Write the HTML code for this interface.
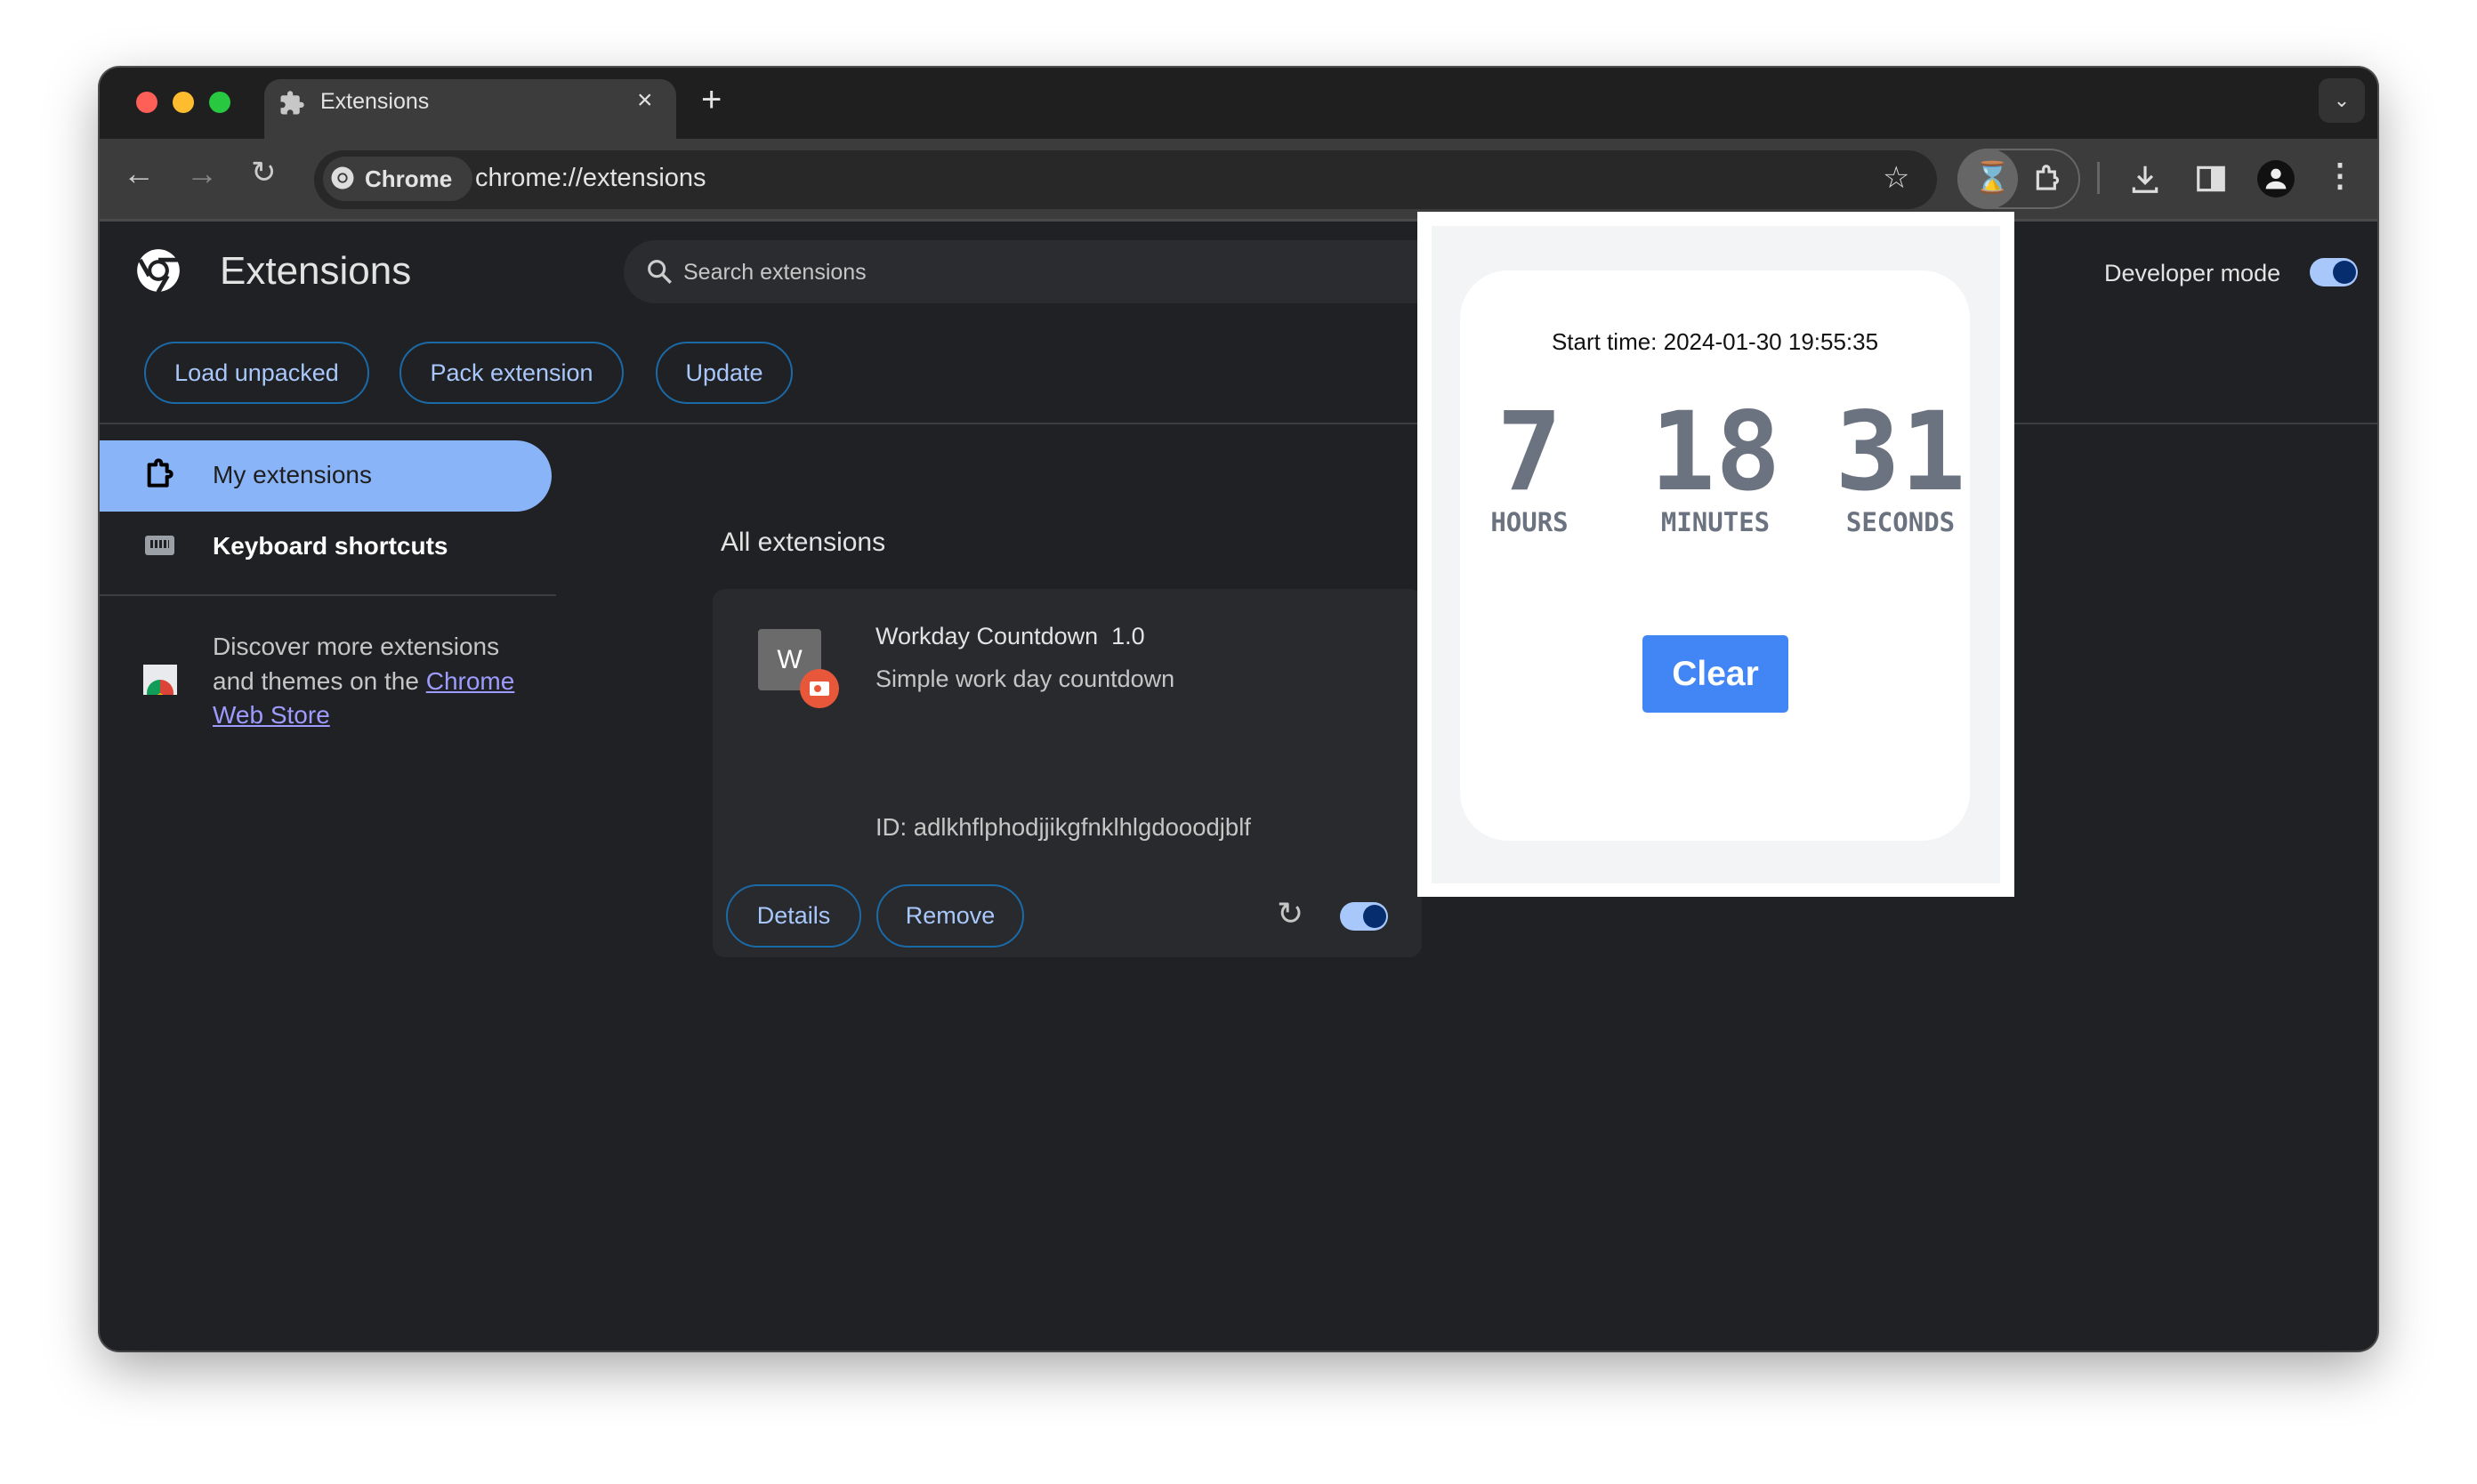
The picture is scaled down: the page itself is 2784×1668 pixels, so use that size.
<!DOCTYPE html>
<html><head><meta charset="utf-8"><style>
*{margin:0;padding:0;box-sizing:border-box}
body{width:2784px;height:1668px;background:#fff;font-family:"Liberation Sans",sans-serif;position:relative;overflow:hidden}
.a{position:absolute}
.win{left:112px;top:76px;width:2560px;height:1442px;background:#202124;border-radius:22px;overflow:hidden;box-shadow:0 20px 60px rgba(0,0,0,.35),0 0 0 2px #555}
.btn{position:absolute;border:2px solid #1b6aa8;border-radius:40px;color:#a8c7fa;font-size:27px;display:flex;align-items:center;justify-content:center}
.t{white-space:nowrap}
.mono{font-family:"DejaVu Sans Mono",monospace;font-weight:bold;color:#6b7280;text-align:center}
</style></head><body>
<div class="a win">
 <div class="a" style="left:0;top:0;width:2560px;height:80px;background:#1f1f1f"></div>
 <div class="a" style="left:41px;top:27px;width:24px;height:24px;border-radius:50%;background:#fe5f57"></div>
 <div class="a" style="left:82px;top:27px;width:24px;height:24px;border-radius:50%;background:#febc2e"></div>
 <div class="a" style="left:123px;top:27px;width:24px;height:24px;border-radius:50%;background:#28c840"></div>
 <div class="a" style="left:185px;top:13px;width:463px;height:80px;background:#3c3c3c;border-radius:18px 18px 0 0"></div>
 <svg class="a" style="left:201px;top:25px" width="30" height="30" viewBox="0 0 24 24"><path fill="#c7c7c7" d="M20.5 11H19V7a2 2 0 0 0-2-2h-4V3.5a2.5 2.5 0 0 0-5 0V5H4a2 2 0 0 0-2 2v3.8h1.5a2.7 2.7 0 0 1 0 5.4H2V20a2 2 0 0 0 2 2h3.8v-1.5a2.7 2.7 0 0 1 5.4 0V22H17a2 2 0 0 0 2-2v-4h1.5a2.5 2.5 0 0 0 0-5z"/></svg>
 <div class="a t" style="left:248px;top:24px;font-size:25px;color:#e3e3e3">Extensions</div>
 <div class="a t" style="left:604px;top:20px;font-size:30px;color:#e3e3e3">×</div>
 <div class="a t" style="left:676px;top:14px;font-size:40px;color:#e3e3e3;font-weight:300">+</div>
 <div class="a" style="left:2494px;top:12px;width:52px;height:50px;background:#333;border-radius:12px;color:#ddd;font-size:22px;text-align:center;line-height:50px">⌄</div>
 <div class="a" style="left:0;top:80px;width:2560px;height:90px;background:#3c3c3c"></div>
 <div class="a" style="left:0;top:170px;width:2560px;height:3px;background:#4a4a4a"></div>
 <div class="a t" style="left:26px;top:98px;font-size:36px;color:#ccc">←</div>
 <div class="a t" style="left:97px;top:98px;font-size:36px;color:#888">→</div>
 <div class="a t" style="left:170px;top:98px;font-size:34px;color:#ccc">↻</div>
 <div class="a" style="left:241px;top:93px;width:1824px;height:66px;background:#282828;border-radius:33px"></div>
 <div class="a" style="left:251px;top:100px;width:168px;height:50px;background:#3c3c3c;border-radius:25px"></div>
 <svg class="a" style="left:258px;top:109px" width="30" height="30" viewBox="0 0 24 24"><circle cx="12" cy="12" r="10" fill="#ddd"/><circle cx="12" cy="12" r="4.5" fill="#3c3c3c"/><circle cx="12" cy="12" r="3" fill="#ddd"/></svg>
 <div class="a t" style="left:298px;top:110px;font-size:26px;color:#e3e3e3;font-weight:bold">Chrome</div>
 <div class="a t" style="left:422px;top:108px;font-size:29px;color:#e3e3e3">chrome://extensions</div>
 <div class="a t" style="left:2004px;top:104px;font-size:34px;color:#ddd">☆</div>
 <div class="a" style="left:2088px;top:91px;width:138px;height:68px;border:2px solid #666;border-radius:34px"></div>
 <div class="a" style="left:2088px;top:91px;width:68px;height:68px;background:#666;border-radius:50%"></div>
 <div class="a t" style="left:2106px;top:104px;font-size:34px;color:#e9a23b">⌛</div>
 <svg class="a" style="left:2172px;top:106px" width="38" height="38" viewBox="0 0 24 24"><path fill="none" stroke="#ddd" stroke-width="2" d="M4 7h4V5a2 2 0 0 1 4 0v2h4v4a2 2 0 0 1 0 4v4H4z"/></svg>
 <div class="a" style="left:2245px;top:106px;width:3px;height:36px;background:#666"></div>
 <svg class="a" style="left:2280px;top:106px" width="38" height="38" viewBox="0 0 24 24"><path fill="none" stroke="#ddd" stroke-width="2" d="M12 3v12M7 10l5 5 5-5M4 18v3h16v-3"/></svg>
 <svg class="a" style="left:2354px;top:106px" width="38" height="38" viewBox="0 0 24 24"><rect x="3" y="4" width="18" height="16" fill="none" stroke="#ddd" stroke-width="2"/><rect x="12" y="4" width="9" height="16" fill="#ddd"/></svg>
 <div class="a" style="left:2425px;top:104px;width:42px;height:42px;background:#111;border-radius:50%"></div>
 <svg class="a" style="left:2429px;top:108px" width="34" height="34" viewBox="0 0 24 24"><circle cx="12" cy="8" r="4" fill="#eee"/><path fill="#eee" d="M4 20c0-4 4-6 8-6s8 2 8 6z"/></svg>
 <div class="a t" style="left:2500px;top:100px;font-size:36px;color:#ddd;font-weight:bold">⋮</div>

 <svg class="a" style="left:40px;top:202px" width="52" height="52" viewBox="0 0 24 24"><circle cx="12" cy="12" r="11" fill="#fff"/><circle cx="12" cy="12" r="5.5" fill="#202124"/><circle cx="12" cy="12" r="3.6" fill="#fff"/><path d="M12 6.5h10M7.2 14.8L2.5 6.5M16.8 14.8l-5 8.6" stroke="#202124" stroke-width="2.2"/></svg>
 <div class="a t" style="left:135px;top:204px;font-size:44px;color:#e3e3e3">Extensions</div>
 <div class="a" style="left:589px;top:194px;width:1000px;height:71px;background:#2b2c2f;border-radius:36px"></div>
 <svg class="a" style="left:612px;top:212px" width="34" height="34" viewBox="0 0 24 24"><circle cx="10" cy="10" r="6" fill="none" stroke="#ccc" stroke-width="2.2"/><path d="M14.5 14.5L21 21" stroke="#ccc" stroke-width="2.4"/></svg>
 <div class="a t" style="left:656px;top:216px;font-size:25px;color:#c4c7c5">Search extensions</div>
 <div class="a t" style="left:2253px;top:216px;font-size:27px;color:#e3e3e3">Developer mode</div>
 <div class="a" style="left:2484px;top:214px;width:54px;height:32px;background:#a8c7fa;border-radius:16px"></div>
 <div class="a" style="left:2510px;top:217px;width:26px;height:26px;background:#062e6f;border-radius:50%"></div>
 <div class="btn" style="left:50px;top:308px;width:253px;height:70px">Load unpacked</div>
 <div class="btn" style="left:337px;top:308px;width:252px;height:70px">Pack extension</div>
 <div class="btn" style="left:625px;top:308px;width:154px;height:70px">Update</div>
 <div class="a" style="left:0;top:399px;width:2560px;height:2px;background:#3c3d40"></div>

 <div class="a" style="left:0;top:419px;width:508px;height:80px;background:#8ab4f8;border-radius:0 40px 40px 0"></div>
 <svg class="a" style="left:49px;top:438px" width="40" height="40" viewBox="0 0 24 24"><path fill="none" stroke="#000" stroke-width="2.4" stroke-linejoin="round" d="M4 5h4.5V3.8a1.8 1.8 0 0 1 3.6 0V5H16v4.5h1.2a1.8 1.8 0 0 1 0 3.6H16V19H4z"/></svg>
 <div class="a t" style="left:127px;top:442px;font-size:28px;color:#1f1f1f">My extensions</div>
 <div class="a" style="left:51px;top:526px;width:33px;height:22px;border-radius:3px;background:#9aa0a6"></div>
 <div class="a" style="left:57px;top:531px;width:21px;height:9px;background:repeating-linear-gradient(90deg,#202124 0 3px,#9aa0a6 3px 5px)"></div>
 <div class="a t" style="left:127px;top:522px;font-size:28px;color:#fff;font-weight:bold">Keyboard shortcuts</div>
 <div class="a" style="left:0;top:592px;width:513px;height:2px;background:#3c3d40"></div>
 <div class="a" style="left:49px;top:671px;width:38px;height:34px;background:#e8eaed"></div>
 <div class="a" style="left:53px;top:688px;width:30px;height:30px;border-radius:50%;background:conic-gradient(#db4437 0 33%,#f4b400 0 66%,#0f9d58 0);clip-path:inset(0 0 13px 0)"></div>
 <div class="a" style="left:127px;top:632px;font-size:28px;line-height:38.5px;color:#c4c7c5;width:345px">Discover more extensions and themes on the <span style="color:#9e9bff;text-decoration:underline">Chrome Web Store</span></div>

 <div class="a t" style="left:698px;top:517px;font-size:30px;color:#e3e3e3">All extensions</div>
 <div class="a" style="left:689px;top:586px;width:797px;height:414px;background:#292a2d;border-radius:14px"></div>
 <div class="a" style="left:740px;top:631px;width:71px;height:69px;background:#6b6b6b;border-radius:4px;color:#fff;font-size:30px;text-align:center;line-height:69px">W</div>
 <div class="a" style="left:787px;top:676px;width:44px;height:44px;background:#e8573a;border-radius:50%"></div>
 <div class="a" style="left:798px;top:690px;width:22px;height:16px;background:#fff;border-radius:2px"></div>
 <div class="a" style="left:803px;top:694px;width:8px;height:8px;background:#e8573a;border-radius:50%"></div>
 <div class="a t" style="left:872px;top:624px;font-size:27px;color:#e3e3e3">Workday Countdown&nbsp;&nbsp;1.0</div>
 <div class="a t" style="left:872px;top:672px;font-size:27px;color:#c4c7c5">Simple work day countdown</div>
 <div class="a t" style="left:872px;top:838px;font-size:27.5px;color:#c4c7c5">ID: adlkhflphodjjikgfnklhlgdooodjblf</div>
 <div class="btn" style="left:704px;top:918px;width:152px;height:71px">Details</div>
 <div class="btn" style="left:873px;top:918px;width:166px;height:71px">Remove</div>
 <div class="a t" style="left:1323px;top:930px;font-size:36px;color:#c4c7c5">↻</div>
 <div class="a" style="left:1394px;top:938px;width:54px;height:32px;background:#a8c7fa;border-radius:16px"></div>
 <div class="a" style="left:1420px;top:941px;width:26px;height:26px;background:#062e6f;border-radius:50%"></div>
</div>

<!-- popup -->
<div class="a" style="left:1593px;top:238px;width:671px;height:770px;background:#fff"></div>
<div class="a" style="left:1609px;top:254px;width:639px;height:739px;background:#f3f4f6"></div>
<div class="a" style="left:1641px;top:304px;width:573px;height:641px;background:#fff;border-radius:54px"></div>
<div class="a t" style="left:1641px;top:369px;width:573px;text-align:center;font-size:26px;color:#111">Start time: 2024-01-30 19:55:35</div>
<div class="a mono" style="left:1619px;top:443px;width:200px;font-size:122px;line-height:130px">7</div>
<div class="a mono" style="left:1828px;top:443px;width:200px;font-size:122px;line-height:130px">18</div>
<div class="a mono" style="left:2036px;top:443px;width:200px;font-size:122px;line-height:130px">31</div>
<div class="a mono" style="left:1619px;top:570px;width:200px;font-size:29px">HOURS</div>
<div class="a mono" style="left:1828px;top:570px;width:200px;font-size:29px">MINUTES</div>
<div class="a mono" style="left:2036px;top:570px;width:200px;font-size:29px">SECONDS</div>
<div class="a" style="left:1846px;top:714px;width:164px;height:87px;background:#4285f4;border-radius:5px;color:#fff;font-weight:bold;font-size:39px;text-align:center;line-height:87px">Clear</div>
</body></html>
